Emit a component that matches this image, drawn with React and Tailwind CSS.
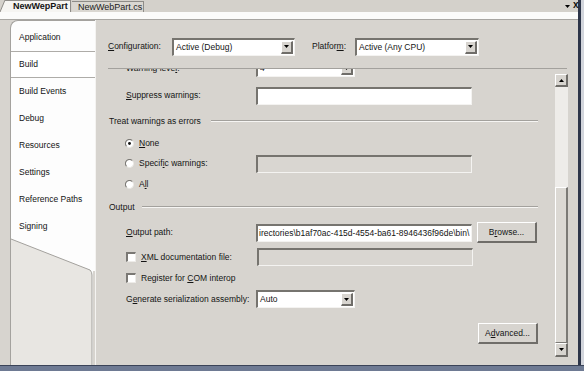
import React from "react";

function U({ children }) {
  return <span className="underline underline-offset-[1px]">{children}</span>;
}

function Arrow({ up }) {
  return (
    <svg width="5" height="3" viewBox="0 0 5 3">
      <polygon points={up ? "0,3 5,3 2.5,0" : "0,0 5,0 2.5,3"} fill="#000" />
    </svg>
  );
}

function Raised({ className = "", children }) {
  return (
    <div
      className={`flex items-center justify-center bg-[#d7d4cf] border-t border-l border-t-white border-l-white border-r-2 border-b-2 border-r-[#6f6d69] border-b-[#6f6d69] ${className}`}
    >
      {children}
    </div>
  );
}

function Combo({ w, text }) {
  return (
    <div
      className={`${w} h-[18px] flex items-stretch bg-white border-t-2 border-l-2 border-t-[#76746f] border-l-[#76746f] border-r border-b border-r-[#f4f3f1] border-b-[#f4f3f1]`}
    >
      <div className="flex-1 flex items-center pl-[2px] whitespace-nowrap">{text}</div>
      <Raised className="w-[12px] m-[1px]">
        <Arrow />
      </Raised>
    </div>
  );
}

function TextBox({ disabled, children }) {
  return (
    <div
      className={`w-[216px] h-[18px] flex items-center overflow-hidden whitespace-nowrap pl-[1px] border-t-2 border-l-2 border-t-[#76746f] border-l-[#76746f] border-r border-b border-r-[#f4f3f1] border-b-[#f4f3f1] ${
        disabled ? "bg-[#d9d6d1]" : "bg-white"
      }`}
    >
      {children}
    </div>
  );
}

function Radio({ checked }) {
  return (
    <svg width="9" height="9" viewBox="0 0 10 10">
      <circle cx="5" cy="5" r="4.5" fill="#fff" />
      <path d="M1.8 8.2 A4.5 4.5 0 0 1 8.2 1.8" stroke="#7c7a76" strokeWidth="1.2" fill="none" />
      <path d="M8.2 1.8 A4.5 4.5 0 0 1 1.8 8.2" stroke="#e8e6e2" strokeWidth="1" fill="none" />
      {checked && <circle cx="5" cy="5" r="1.6" fill="#111" />}
    </svg>
  );
}

function Check() {
  return (
    <div className="w-[10px] h-[10px] bg-white border-t-2 border-l-2 border-t-[#7a7874] border-l-[#7a7874] border-r border-b border-r-[#eeece9] border-b-[#eeece9]" />
  );
}

function GroupHeader({ label, gap }) {
  return (
    <div className="w-[442px] h-[18px] flex items-center pl-[13px]">
      <span className="whitespace-nowrap">{label}</span>
      <div className={`flex-1 ${gap} border-t border-t-[#a3a19d] border-b border-b-[#f6f5f3]`} />
    </div>
  );
}

const tabs = [
  "Application",
  "Build",
  "Build Events",
  "Debug",
  "Resources",
  "Settings",
  "Reference Paths",
  "Signing",
];

export default function App() {
  return (
    <div className="w-[584px] h-[371px] bg-[#d7d4cf] flex flex-col overflow-hidden font-['Liberation_Sans',Arial,sans-serif] text-[8.5px] leading-none text-[#141414]">
      <div className="flex flex-1 min-h-0">
        <div className="w-[578px] flex flex-col">
          {/* document tab strip */}
          <div className="h-[12px] flex items-end relative bg-[#d4d1cb]">
            <svg width="5" height="12" viewBox="0 0 5 12" className="shrink-0">
              <polygon points="0,12 5,0 5,12" fill="#f6f5f2" />
              <line x1="0" y1="12" x2="5" y2="0" stroke="#8e8c88" strokeWidth="1" />
            </svg>
            <div className="w-[66px] h-[12px] bg-[#f6f5f2] border-t border-r border-[#8e8c88] flex items-center pl-[8px] font-bold text-[9px] whitespace-nowrap">
              NewWepPart
            </div>
            <div className="ml-[1px] w-[72px] h-[11px] bg-[#dad7d1] border-t border-r border-[#8e8c88] flex items-center pl-[6px] text-[9px] whitespace-nowrap text-[#222]">
              NewWebPart.cs
            </div>
            <div className="ml-auto mr-[8px] mb-[4px]">
              <Arrow />
            </div>
          </div>
          <div className="h-[8px] bg-[#fbfbfa] border-b border-b-[#a8a6a2]" />

          {/* body */}
          <div className="flex flex-1 min-h-0">
            <div className="w-[10px]" />
            {/* left tab list */}
            <div className="w-[85px] relative bg-[#fdfdfd] border-t border-l border-[#a4a29e] rounded-tl-[8px]">
              <svg
                className="absolute left-0 top-0"
                width="84"
                height="344"
                viewBox="0 0 84 344"
              >
                <polygon points="0,218 79,249 81,253 81,344 0,344" fill="#e8e6e2" />
                <polygon points="82,250 84,250 84,344 82,344" fill="#d7d4cf" />
                <path d="M0 218 L79 249 Q81 251 81 254 L81 344" stroke="#a3a19d" strokeWidth="1" fill="none" />
              </svg>
              <div className="relative pt-[3px] flex flex-col">
                {tabs.map((t) => (
                  <div
                    key={t}
                    className={`h-[27px] flex items-center pl-[8px] whitespace-nowrap ${
                      t === "Build" ? "border-y border-[#aeaca8] bg-white" : ""
                    }`}
                  >
                    {t}
                  </div>
                ))}
              </div>
            </div>

            {/* content panel */}
            <div className="flex-1 flex flex-col pt-[3px] border-l border-l-[#f4f3f1]">
              <div className="h-[45px] flex flex-col">
                <div className="mt-[15px] h-[17px] flex items-center pl-[12px]">
                  <div className="w-[64px]">
                    <U>C</U>onfiguration:
                  </div>
                  <Combo w="w-[123px]" text="Active (Debug)" />
                  <div className="ml-[17px] w-[43px]">
                    Platfor<U>m</U>:
                  </div>
                  <Combo w="w-[124px]" text="Active (Any CPU)" />
                </div>
              </div>
              <div className="ml-[12px] w-[459px] h-px bg-[#a3a19d]" />

              <div className="flex flex-1 min-h-0">
                {/* scrolled property area */}
                <div className="w-[459px] overflow-hidden">
                  <div className="-mt-[10px] flex flex-col">
                    <div className="h-[18px] flex items-center pl-[30px]">
                      <div className="w-[130px]">
                        Warning leve<U>l</U>:
                      </div>
                      <Combo w="w-[99px]" text="4" />
                    </div>
                    <div className="mt-[10px] h-[17px] flex items-center pl-[30px]">
                      <div className="w-[130px]">
                        <U>S</U>uppress warnings:
                      </div>
                      <div className="h-[17px] flex items-center">
                        <TextBox />
                      </div>
                    </div>
                    <div className="mt-[8px]">
                      <GroupHeader label="Treat warnings as errors" gap="ml-[10px]" />
                    </div>
                    <div className="mt-[5px] h-[16px] flex items-center pl-[29px]">
                      <Radio checked />
                      <span className="ml-[5px]">
                        <U>N</U>one
                      </span>
                    </div>
                    <div className="mt-[4px] h-[17px] flex items-center pl-[29px]">
                      <Radio />
                      <span className="ml-[5px] w-[117px]">
                        Specif<U>i</U>c warnings:
                      </span>
                      <TextBox disabled />
                    </div>
                    <div className="mt-[4px] h-[16px] flex items-center pl-[29px]">
                      <Radio />
                      <span className="ml-[5px]">
                        A<U>l</U>l
                      </span>
                    </div>
                    <div className="mt-[6px]">
                      <GroupHeader label="Output" gap="ml-[7px]" />
                    </div>
                    <div className="mt-[6px] h-[21px] flex items-center pl-[30px]">
                      <div className="w-[130px]">
                        <U>O</U>utput path:
                      </div>
                      <TextBox>irectories\b1af70ac-415d-4554-ba61-8946436f96de\bin\</TextBox>
                      <Raised className="ml-[5px] w-[60px] h-[21px]">
                        B<U>r</U>owse...
                      </Raised>
                    </div>
                    <div className="mt-[5px] h-[18px] flex items-center pl-[30px]">
                      <Check />
                      <span className="ml-[5px] w-[116px]">
                        <U>X</U>ML documentation file:
                      </span>
                      <TextBox disabled />
                    </div>
                    <div className="mt-[4px] h-[16px] flex items-center pl-[30px]">
                      <Check />
                      <span className="ml-[5px]">
                        Register for <U>C</U>OM interop
                      </span>
                    </div>
                    <div className="mt-[4px] h-[18px] flex items-center pl-[30px]">
                      <div className="w-[130px]">
                        G<U>e</U>nerate serialization assembly:
                      </div>
                      <Combo w="w-[99px]" text="Auto" />
                    </div>
                    <div className="mt-[15px] h-[21px] flex w-[442px] justify-end">
                      <Raised className="w-[60px] h-[21px]">
                        A<U>d</U>vanced...
                      </Raised>
                    </div>
                  </div>
                </div>

                {/* scrollbar */}
                <div className="w-[13px] mt-[5px] mb-[8px] flex flex-col">
                  <Raised className="h-[13px]">
                    <Arrow up />
                  </Raised>
                  <div className="h-[100px] bg-[#eeece9]" />
                  <div className="flex-1 bg-[#dcd9d4] border-t border-l border-t-white border-l-white border-r-2 border-b border-r-[#7c7a76] border-b-[#7c7a76]" />
                  <Raised className="h-[14px]">
                    <Arrow />
                  </Raised>
                </div>
              </div>
            </div>
          </div>
        </div>
        <div className="w-[3px] bg-[#2d3549] relative">
          <span className="absolute -left-[5px] top-[0px] text-[10px] font-bold text-[#111]">x</span>
        </div>
        <div className="w-[3px] bg-[#d2d5dc]" />
      </div>
      <div className="h-[6px] bg-[#6e7a93] border-t border-t-[#3a4358]" />
    </div>
  );
}
